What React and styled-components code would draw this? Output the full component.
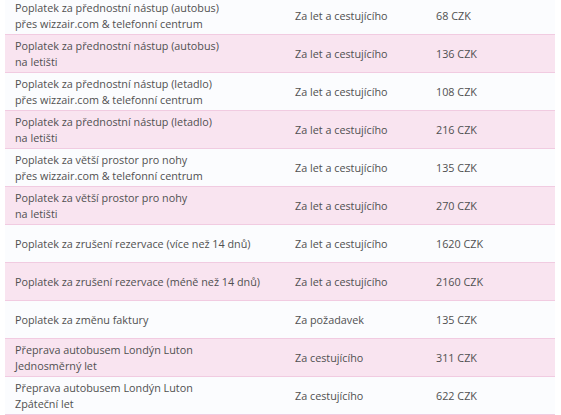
import React from "react";
import styled, { createGlobalStyle } from "styled-components";

const Global = createGlobalStyle`
  html, body { margin: 0; padding: 0; background: #ffffff; }
  body { font-family: "Open Sans", "DejaVu Sans", sans-serif; }
`;

const Wrap = styled.div`
  padding: 0 6px 0 5px;
  margin-top: -3px;
  overflow: hidden;
  height: 418px;
`;

const Table = styled.table`
  width: 550px;
  border-collapse: collapse;
  table-layout: fixed;
  font-size: 10.8px;
  color: #505050;
`;

const Row = styled.tr`
  background: ${(p) => (p.$alt ? "#f9e4f0" : "#fbfcfe")};
  border-bottom: 1px solid #f1cbe1;
`;

const Cell = styled.td`
  height: 37px;
  padding: 0 0 0 10px;
  vertical-align: middle;
  line-height: 16px;
  white-space: nowrap;
`;

const rows = [
  ["Poplatek za přednostní nástup (autobus)\npřes wizzair.com & telefonní centrum", "Za let a cestujícího", "68 CZK"],
  ["Poplatek za přednostní nástup (autobus)\nna letišti", "Za let a cestujícího", "136 CZK"],
  ["Poplatek za přednostní nástup (letadlo)\npřes wizzair.com & telefonní centrum", "Za let a cestujícího", "108 CZK"],
  ["Poplatek za přednostní nástup (letadlo)\nna letišti", "Za let a cestujícího", "216 CZK"],
  ["Poplatek za větší prostor pro nohy\npřes wizzair.com & telefonní centrum", "Za let a cestujícího", "135 CZK"],
  ["Poplatek za větší prostor pro nohy\nna letišti", "Za let a cestujícího", "270 CZK"],
  ["Poplatek za zrušení rezervace (více než 14 dnů)", "Za let a cestujícího", "1620 CZK"],
  ["Poplatek za zrušení rezervace (méně než 14 dnů)", "Za let a cestujícího", "2160 CZK"],
  ["Poplatek za změnu faktury", "Za požadavek", "135 CZK"],
  ["Přeprava autobusem Londýn Luton\nJednosměrný let", "Za cestujícího", "311 CZK"],
  ["Přeprava autobusem Londýn Luton\nZpáteční let", "Za cestujícího", "622 CZK"],
];

function Lines({ text }) {
  const parts = text.split("\n");
  return parts.map((p, i) => (
    <React.Fragment key={i}>
      {p}
      {i < parts.length - 1 && <br />}
    </React.Fragment>
  ));
}

export default function App() {
  return (
    <>
      <Global />
      <Wrap>
        <Table>
          <colgroup>
            <col style={{ width: 280 }} />
            <col style={{ width: 141 }} />
            <col style={{ width: 129 }} />
          </colgroup>
          <tbody>
            {rows.map((r, i) => (
              <Row key={i} $alt={i % 2 === 1}>
                <Cell>
                  <Lines text={r[0]} />
                </Cell>
                <Cell>{r[1]}</Cell>
                <Cell>{r[2]}</Cell>
              </Row>
            ))}
          </tbody>
        </Table>
      </Wrap>
    </>
  );
}
